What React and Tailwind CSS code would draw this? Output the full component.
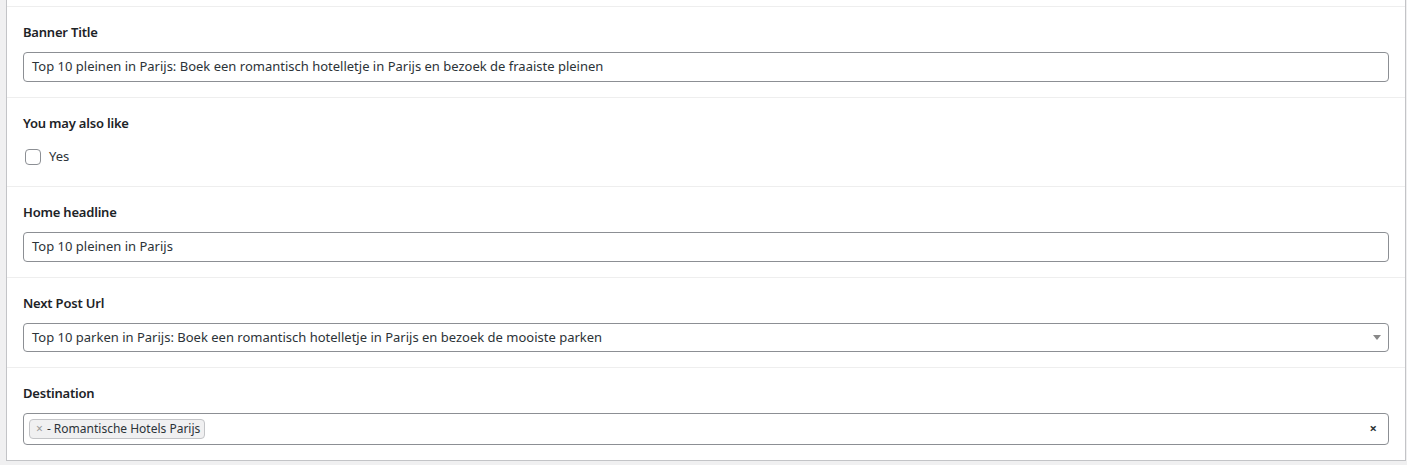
import React from 'react';

const font = { fontFamily: '"Noto Sans", "Open Sans", sans-serif' };

const Field = ({ label, children }) => (
  <div className="border-t border-[#eeeeee] px-4 pt-[15px] pb-[15px]">
    <div className="mb-[10px] h-[20px] text-[13px] font-semibold leading-[20px] tracking-[-0.2px] text-[#1d2327]">
      {label}
    </div>
    {children}
  </div>
);

const TextInput = ({ value }) => (
  <div className="flex h-[30px] items-center rounded-[4px] border border-[#8c8f94] bg-white px-2 text-[13px] text-[#2c3338]">
    {value}
  </div>
);

export default function App() {
  return (
    <div className="min-h-[465px] bg-[#f0f0f1] pl-[6px] pr-[1px]" style={font}>
      <div className="w-[1400px] border-x border-b border-[#c3c4c7] bg-white pt-[6px]">
        <Field label="Banner Title">
          <TextInput value="Top 10 pleinen in Parijs: Boek een romantisch hotelletje in Parijs en bezoek de fraaiste pleinen" />
        </Field>

        <Field label="You may also like">
          <label className="flex h-[28px] items-center gap-2 pl-[2px] text-[13px] text-[#2c3338]">
            <span className="h-4 w-4 rounded-[4px] border border-[#8c8f94] bg-white" />
            <span>Yes</span>
          </label>
        </Field>

        <Field label="Home headline">
          <TextInput value="Top 10 pleinen in Parijs" />
        </Field>

        <Field label="Next Post Url">
          <div className="relative flex h-[29px] items-center rounded-[4px] border border-[#8c8f94] bg-white px-2 text-[13px] text-[#2c3338]">
            <span>Top 10 parken in Parijs: Boek een romantisch hotelletje in Parijs en bezoek de mooiste parken</span>
            <span className="absolute right-[7px] top-[11px] h-0 w-0 border-x-[4px] border-t-[5px] border-x-transparent border-t-[#888888]" />
          </div>
        </Field>

        <Field label="Destination">
          <div className="flex h-[32px] items-center justify-between rounded-[4px] border border-[#8c8f94] bg-white pl-[5px] pr-[11px]">
            <span className="flex h-[20px] items-center rounded-[4px] border border-[#c3c4c7] bg-[#f0f0f1] pl-[6px] pr-[4px] text-[12px] text-[#2c3338]">
              <span className="mr-[4px] text-[12px] text-[#999999]">×</span>
              <span>- Romantische Hotels Parijs</span>
            </span>
            <span className="text-[13px] font-bold text-[#2c3338]">×</span>
          </div>
        </Field>
      </div>
    </div>
  );
}
